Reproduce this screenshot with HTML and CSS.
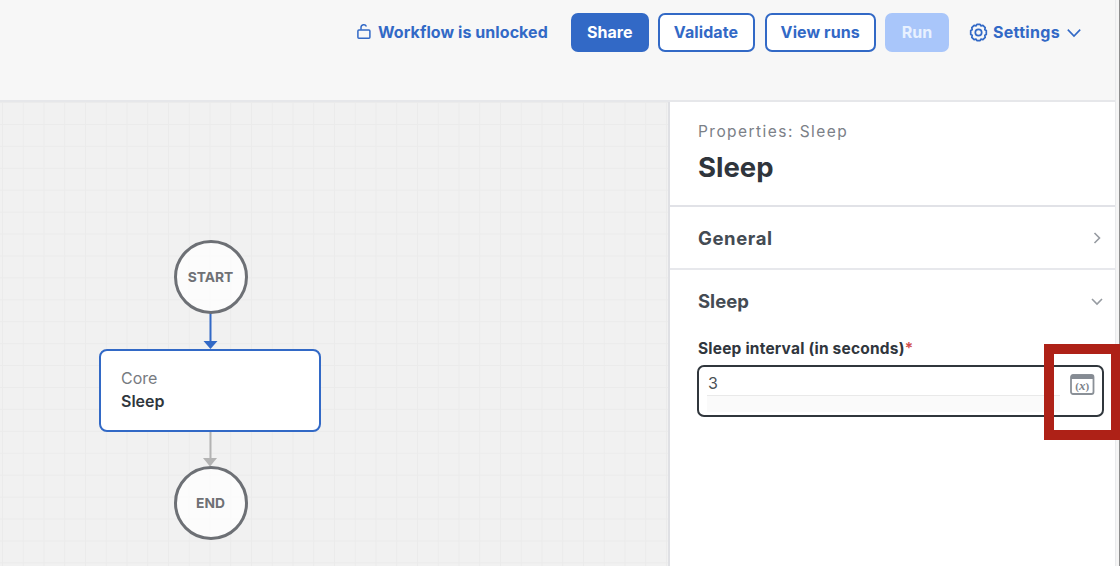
FILE: index.html
```html
<!DOCTYPE html>
<html lang="en">
<head>
<meta charset="utf-8">
<title>Workflow editor</title>
<link rel="stylesheet" href="styles.css">
</head>
<body>
<div class="app">
  <header class="toolbar">
    <span class="lock">
      <svg width="16" height="18" viewBox="0 0 16 18" fill="none" stroke="currentColor" stroke-width="1.5"><rect x="1.9" y="7" width="12" height="8.200" rx="1"/><path d="M5 6.800V4.600a2.800 2.800 0 0 1 5.400-1.100"/></svg>
      <span class="lock-text">Workflow is unlocked</span>
    </span>
    <button class="btn share">Share</button>
    <button class="btn outline validate">Validate</button>
    <button class="btn outline runs">View runs</button>
    <button class="btn run">Run</button>
    <span class="settings">
      <svg width="19" height="19" viewBox="0 0 19 19" fill="none" stroke="currentColor" stroke-width="1.700" stroke-linejoin="round"><path d="M7.900 1.300h3.200l.8 1.500 2-.4 2.300 2.300-.4 2 1.500.8v4l-1.500.8.4 2-2.300 2.300-2-.4-.8 1.500H7.900l-.8-1.500-2 .4-2.300-2.300.4-2-1.500-.8v-4l1.500-.8-.4-2 2.300-2.300 2 .4z"/><circle cx="9.500" cy="9.500" r="3.200"/></svg>
      <span class="settings-text">Settings</span>
      <svg class="down" width="14" height="10" viewBox="0 0 14 10" fill="none" stroke="currentColor" stroke-width="1.6"><path d="M.8 1.600 7 8l6.200-6.400"/></svg>
    </span>
  </header>
  <main class="workspace">
    <section class="canvas">
      <svg class="edges" width="669" height="465" viewBox="0 101 669 465">
        <path d="M210.500 313v30" stroke="#3269c6" stroke-width="2"/>
        <path d="M203.500 341h14l-7 8z" fill="#3269c6"/>
        <path d="M210.500 431v30" stroke="#b3b3b3" stroke-width="2"/>
        <path d="M203 458h14l-7 8.500z" fill="#b3b3b3"/>
      </svg>
      <div class="terminal start"><span>START</span></div>
      <div class="card"><div class="card-group">Core</div><div class="card-name">Sleep</div></div>
      <div class="terminal end"><span>END</span></div>
    </section>
    <aside class="panel">
      <div class="heading">
        <div class="crumb"><span>Properties: Sleep</span></div>
        <h1><span>Sleep</span></h1>
      </div>
      <div class="section general">
        <span class="section-title">General</span>
        <svg width="14" height="14" viewBox="0 0 14 14" fill="none" stroke="#969ba1" stroke-width="1.600"><path d="m4.500 2 5 5-5 5"/></svg>
      </div>
      <div class="section sleep">
        <span class="section-title">Sleep</span>
        <svg width="14" height="14" viewBox="0 0 14 14" fill="none" stroke="#969ba1" stroke-width="1.600"><path d="m2 5 5 5 5-5"/></svg>
      </div>
      <label class="field-label"><span>Sleep interval (in seconds)</span><b>*</b></label>
      <div class="field">
        <div class="editor"><div class="value">3</div><div class="rest"></div></div>
        <svg class="expr" width="25" height="22" viewBox="0 0 25 22"><rect x="1" y="1" width="22.500" height="19" rx="2" fill="#fff" stroke="#8a9097" stroke-width="1.800"/><path d="M1 1h22.500v4H1z" fill="#858b93"/><text x="12.200" y="15.500" text-anchor="middle">(<tspan class="expr-x">x</tspan>)</text></svg>
      </div>
    </aside>
  </main>
</div>
<div class="gutter"></div>
<div class="highlight"></div>
</body>
</html>
```
FILE: styles.css
```css
* { box-sizing: border-box; }
body {
  margin: 0;
  display: flex;
  position: relative;
  width: 1120px;
  height: 566px;
  overflow: hidden;
  font-family: Inter, "Liberation Sans", sans-serif;
  background: #fff;
}
.app { width: 1115px; display: flex; flex-direction: column; }
.gutter {
  width: 5px;
  background: #f5f5f5;
  border-left: 1px solid #e9eaec;
  border-right: 1px solid #8d8d8d;
}
.toolbar {
  height: 102px;
  display: flex;
  align-items: flex-start;
  padding: 13px 0 0 356px;
  background: #f7f7f7;
  border-bottom: 2px solid #e6e7ea;
  color: #3269c6;
  font-size: 16px;
  font-weight: 700;
  white-space: nowrap;
}
.lock, .settings { display: flex; align-items: center; height: 38px; }
.lock { width: 214.500px; gap: 6px; }
.lock-text { letter-spacing: .07px; }
.btn {
  height: 39px;
  padding: 0 0 2px;
  border: 0;
  border-radius: 7px;
  font: inherit;
  color: #fff;
  background: #3269c6;
}
.share { width: 78.500px; margin-right: 9px; }
.btn.outline { background: #fff; color: #3269c6; border: 2px solid #3269c6; letter-spacing: .1px; }
.btn.validate { width: 97px; margin-right: 9.500px; padding-right: 1px; }
.runs { width: 111.500px; margin-right: 9px; }
.btn.run { width: 64px; margin-right: 20px; background: #a9c6fa; color: #e8f1ff; }
.settings-text { margin-left: 5px; letter-spacing: .3px; }
.down { margin: 1px 0 0 7px; }
.workspace { flex: 1; display: flex; }
.canvas {
  width: 668px;
  position: relative;
  background-color: #f1f1f1;
  background-image:
    linear-gradient(to right, #ebebeb 1px, transparent 1px),
    linear-gradient(to bottom, #ebebeb 1px, transparent 1px);
  background-size: 20.750px 21.930px;
  background-position: 2px 0;
}
.edges { position: absolute; left: 0; top: -1px; }
.terminal {
  position: absolute;
  left: 173.500px;
  width: 74px;
  height: 74px;
  padding-bottom: 1px;
  border: 3px solid #6d7075;
  border-radius: 50%;
  background: rgba(255,255,255,.75);
  color: #6f7175;
  display: flex;
  align-items: center;
  justify-content: center;
  font-size: 13.800px;
  font-weight: 700;
}
.start { top: 138px; }
.end { top: 364px; }
.card {
  position: absolute;
  left: 99px;
  top: 247px;
  width: 222px;
  height: 83px;
  padding: 16px 20px;
  border: 2px solid #3269c6;
  border-radius: 8px;
  background: #fff;
  font-size: 16px;
  line-height: 23px;
}
.card-group { color: #777b81; }
.card-name { color: #30363d; font-weight: 600; }
.panel { flex: 1; background: #fff; border-left: 2px solid #dfe0e4; }
.heading { height: 105px; border-bottom: 2px solid #e1e2e7; padding: 20px 28px; }
.crumb { font-size: 15.500px; line-height: 20px; letter-spacing: 1.450px; color: #7b8087; }
h1 { margin: 8px 0 0; font-size: 27.500px; line-height: 34px; font-weight: 700; color: #2f353c; }
.section { display: flex; align-items: center; justify-content: space-between; padding: 0 11px 0 28px; height: 63px; font-size: 18.500px; font-weight: 700; color: #444b53; }
.general .section-title { letter-spacing: .6px; }
.sleep .section-title { margin-top: -2px; }
.sleep svg { margin-top: -1px; }
.general { border-bottom: 2px solid #e7e8ec; }
.field-label { display: block; margin: 6px 0 0 28px; font-size: 15.500px; line-height: 20px; letter-spacing: .2px; font-weight: 700; color: #30363d; }
.field-label b { color: #d04b4b; font-weight: 600; }
.field {
  display: flex;
  justify-content: space-between;
  width: 407px;
  height: 52px;
  margin: 6px 0 0 27px;
  padding: 5px 7px 3px 8px;
  border: 2px solid #30363c;
  border-radius: 7px;
}
.editor { width: 353px; }
.value { height: 23px; padding-left: 1px; font-size: 16px; line-height: 22px; color: #4b5055; }
.rest { height: 17px; background: #fafafa; border-top: 1px solid #e9e9e9; }
.expr { margin-top: 2px; }
.expr text { font: 700 11px "Liberation Serif", serif; fill: #7c8289; }
.expr-x { font-style: italic; font-size: 13px; }
.highlight { position: absolute; left: 1044px; top: 344px; width: 77px; height: 96px; border: 10px solid #ae2117; }
```
